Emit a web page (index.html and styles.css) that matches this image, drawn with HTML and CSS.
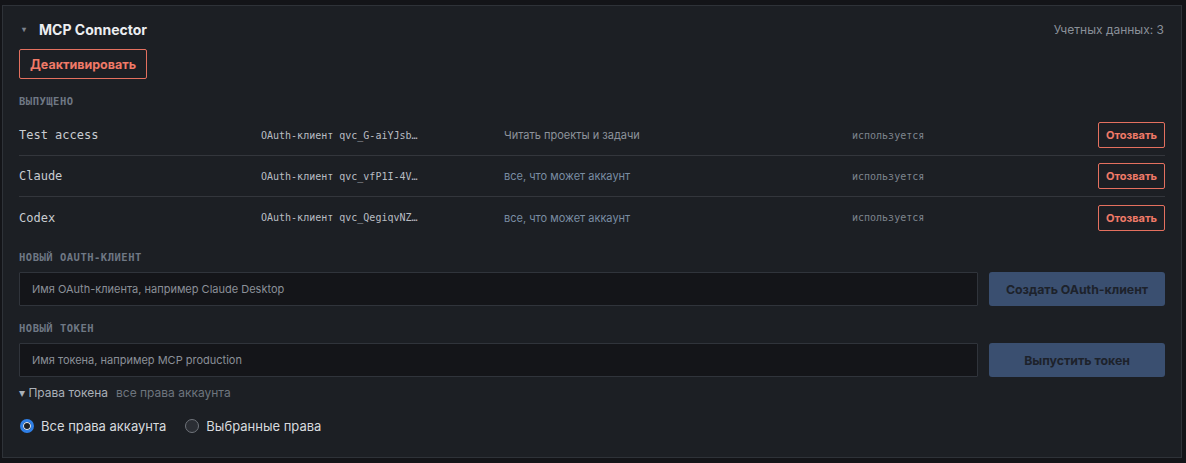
FILE: index.html
```html
<!DOCTYPE html>
<html lang="ru">

<head>
    <meta charset="UTF-8">
    <meta name="viewport" content="width=device-width, initial-scale=1.0">
    <title>MCP Connector</title>
    <link rel="stylesheet" href="styles.css">
</head>

<body>
    <div class="card">
        <div class="card-head">
            <div class="title"><span class="caret">▾</span>MCP Connector</div>
            <div class="count">Учетных данных: 3</div>
        </div>
        <button class="btn-danger btn-big">Деактивировать</button>

        <div class="label issued-label">Выпущено</div>
        <ul class="creds">
            <li>
                <span class="c-name">Test access</span>
                <span class="c-client">OAuth-клиент qvc_G-aiYJsb…</span>
                <span class="c-scope">Читать проекты и задачи</span>
                <span class="c-status">используется</span>
                <button class="btn-danger btn-small">Отозвать</button>
            </li>
            <li>
                <span class="c-name">Claude</span>
                <span class="c-client">OAuth-клиент qvc_vfP1I-4V…</span>
                <span class="c-scope all">все, что может аккаунт</span>
                <span class="c-status">используется</span>
                <button class="btn-danger btn-small">Отозвать</button>
            </li>
            <li>
                <span class="c-name">Codex</span>
                <span class="c-client">OAuth-клиент qvc_QegiqvNZ…</span>
                <span class="c-scope all">все, что может аккаунт</span>
                <span class="c-status">используется</span>
                <button class="btn-danger btn-small">Отозвать</button>
            </li>
        </ul>

        <div class="label">Новый OAuth-клиент</div>
        <div class="form-row">
            <input class="field" type="text" placeholder="Имя OAuth-клиента, например Claude Desktop">
            <button class="btn-primary">Создать OAuth-клиент</button>
        </div>

        <div class="label token-label">Новый токен</div>
        <div class="form-row">
            <input class="field" type="text" placeholder="Имя токена, например MCP production">
            <button class="btn-primary">Выпустить токен</button>
        </div>

        <div class="rights">
            <span class="rights-toggle">▾ Права токена</span>
            <span class="rights-sum">все права аккаунта</span>
        </div>
        <div class="radios">
            <label class="radio"><span class="dot checked"></span>Все права аккаунта</label>
            <label class="radio"><span class="dot"></span>Выбранные права</label>
        </div>
    </div>
</body>

</html>
```

FILE: styles.css
```css
* {
    box-sizing: border-box;
}

body {
    margin: 0;
    padding: 5px 4px 5px 2px;
    background: #131418;
    font-family: Inter, "Noto Sans", sans-serif;
    color: #d3d6db;
}

.card {
    background: #1c1f24;
    border: 1px solid #2e3238;
    padding: 16px 16px 20px;
    height: 453px;
}

.card-head {
    display: flex;
    justify-content: space-between;
    align-items: center;
    height: 14px;
}

.title {
    font-size: 14px;
    font-weight: 700;
    color: #eceef1;
    display: flex;
    align-items: center;
}

.caret {
    font-size: 8px;
    color: #7c838c;
    margin: 0 13px 0 3px;
}

.count {
    font-size: 12px;
    color: #8a9099;
    padding-right: 1px;
}

button {
    font-family: inherit;
    cursor: pointer;
}

.btn-danger {
    background: transparent;
    border: 1px solid #e4705f;
    color: #f07a68;
    font-weight: 700;
    border-radius: 2px;
}

.btn-big {
    margin-top: 13px;
    height: 30px;
    padding: 0 10px;
    font-size: 12.5px;
}

.btn-small {
    height: 26px;
    width: 67px;
    padding: 0;
    font-size: 11px;
    margin-left: auto;
}

.label {
    font-family: "DejaVu Sans Mono", monospace;
    font-size: 10.5px;
    font-weight: 700;
    letter-spacing: 0.5px;
    text-transform: uppercase;
    color: #6f7884;
    margin-top: 13px;
    height: 12px;
    line-height: 12px;
}

.issued-label {
    margin-top: 16px;
}

.token-label {
    margin-top: 16px;
}

.creds {
    list-style: none;
    margin: 8px 0 3px;
    padding: 0;
}

.creds li {
    display: flex;
    align-items: center;
    height: 41px;
    border-bottom: 1px solid #33363c;
}

.creds li:last-child {
    border-bottom: 0;
}

.c-name {
    font-family: "DejaVu Sans Mono", monospace;
    font-size: 12px;
    color: #c9ccd1;
    width: 242px;
}

.c-client {
    font-family: "DejaVu Sans Mono", monospace;
    font-size: 10px;
    color: #b9bdc3;
    width: 243px;
}

.c-scope {
    font-size: 11px;
    color: #8d939b;
    width: 348px;
}

.c-scope.all {
    color: #7a8da3;
}

.c-status {
    font-family: "DejaVu Sans Mono", monospace;
    font-size: 10px;
    color: #7e858e;
}

.form-row {
    display: flex;
    gap: 11px;
    margin-top: 9px;
}

.field {
    flex: 1;
    height: 34px;
    background: #141519;
    border: 1px solid #30343b;
    border-radius: 1px;
    padding: 0 12px;
    font-family: inherit;
    font-size: 11px;
    color: #d3d6db;
    outline: none;
}

.field::placeholder {
    color: #8b9098;
}

.btn-primary {
    width: 176px;
    height: 34px;
    border: 0;
    border-radius: 3px;
    background: #3a4f70;
    color: #1d222b;
    font-size: 12.3px;
    font-weight: 700;
}

.rights {
    margin-top: 7px;
    font-size: 12px;
    height: 16px;
    display: flex;
    align-items: center;
    gap: 8px;
}

.rights-toggle {
    color: #aab0b8;
}

.rights-sum {
    color: #6e757e;
}

.radios {
    display: flex;
    gap: 18px;
    margin-top: 18px;
}

.radio {
    display: flex;
    align-items: center;
    gap: 7px;
    font-size: 13px;
    color: #d7dade;
}

.dot {
    width: 14px;
    height: 14px;
    border-radius: 50%;
    border: 1px solid #70747b;
    background: #2b2e34;
    margin-left: 1px;
}

.dot.checked {
    border: 3px solid #2f7fe6;
    background: #1c1f24;
    box-shadow: inset 0 0 0 1px #e8ecf2;
}
```
